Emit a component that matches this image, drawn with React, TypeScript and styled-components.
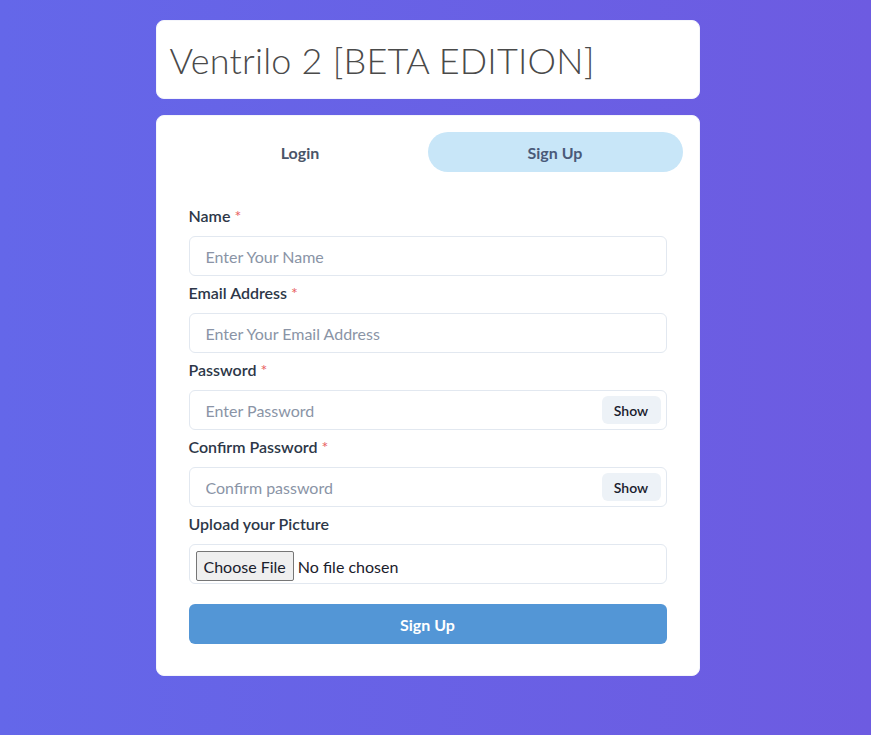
import { useState } from 'react';
import styled, { createGlobalStyle } from 'styled-components';

const GlobalStyle = createGlobalStyle`
  html, body {
    margin: 0;
    padding: 0;
  }
  body {
    min-height: 735px;
    background: linear-gradient(to right, #6467e9, #6d5be1);
    font-family: "Lato", "Noto Sans", sans-serif;
    color: #2d3748;
  }
  * {
    box-sizing: border-box;
  }
`;

const Page = styled.div`
  width: 544px;
  margin-left: calc(50% - 280px);
  padding: 20px 0 0;
  display: flex;
  flex-direction: column;
  gap: 16px;
`;

const TitleBox = styled.div`
  background: #fff;
  border: 1px solid #f4f5fb;
  border-radius: 8px;
  height: 79px;
  padding: 0 13px;
  display: flex;
  align-items: center;
`;

const Title = styled.h1`
  margin: 0;
  font-family: "Lato", "Open Sans", sans-serif;
  font-weight: 300;
  font-size: 36px;
  color: #4a4a4a;
  letter-spacing: 0.2px;
`;

const Card = styled.div`
  background: #fff;
  border: 1px solid #f4f5fb;
  border-radius: 8px;
  padding: 16px 16px 15px;
`;

const TabList = styled.div`
  display: grid;
  grid-template-columns: 1fr 1fr;
  margin-bottom: 16px;
`;

const Tab = styled.button<{ $active: boolean }>`
  height: 40px;
  border: none;
  border-radius: 999px;
  background: ${p => (p.$active ? '#c8e6f8' : 'transparent')};
  color: ${p => (p.$active ? '#4a5a78' : '#4a5568')};
  font-family: inherit;
  font-size: 16px;
  font-weight: 700;
  cursor: pointer;
`;

const Panel = styled.form`
  padding: 16px;
  display: flex;
  flex-direction: column;
  gap: 5px;
`;

const Field = styled.div`
  display: flex;
  flex-direction: column;
`;

const Label = styled.label`
  font-size: 16px;
  font-weight: 600;
  line-height: 24px;
  margin-bottom: 8px;
  color: #2d3748;
`;

const Star = styled.span`
  color: #e86060;
  margin-left: 4px;
  font-weight: 400;
`;

const InputGroup = styled.div`
  position: relative;
`;

const Input = styled.input`
  width: 100%;
  height: 40px;
  border: 1px solid #e2e8f0;
  border-radius: 6px;
  padding: 0 16px;
  font-family: inherit;
  font-size: 16px;
  color: #2d3748;
  outline: none;
  &::placeholder {
    color: #8a94a6;
  }
`;

const FileInput = styled(Input)`
  padding: 6px;
  color: #1a202c;
  &::file-selector-button {
    height: 30px;
    margin-right: 4px;
    padding: 0 7px;
    background: #efefef;
    border: 1px solid #767676;
    border-radius: 2px;
    font-family: inherit;
    font-size: 16px;
    color: #1a202c;
  }
`;

const ShowButton = styled.button`
  position: absolute;
  top: 6px;
  right: 6px;
  width: 59px;
  height: 28px;
  border: none;
  border-radius: 6px;
  background: #edf2f7;
  color: #1a202c;
  font-family: inherit;
  font-size: 14px;
  font-weight: 600;
`;

const Submit = styled.button`
  margin-top: 15px;
  height: 40px;
  border: none;
  border-radius: 6px;
  background: #5396d6;
  color: #fff;
  font-family: inherit;
  font-size: 16px;
  font-weight: 700;
`;

type TextFieldProps = {
  label: string;
  placeholder: string;
  type?: string;
  toggle?: boolean;
};

const TextField = ({ label, placeholder, type = 'text', toggle }: TextFieldProps) => (
  <Field>
    <Label>
      {label}
      <Star>*</Star>
    </Label>
    <InputGroup>
      <Input type={type} placeholder={placeholder} />
      {toggle && <ShowButton type="button">Show</ShowButton>}
    </InputGroup>
  </Field>
);

const App = () => {
  const [tab, setTab] = useState<'login' | 'signup'>('signup');
  return (
    <>
      <GlobalStyle />
      <Page>
        <TitleBox>
          <Title>Ventrilo 2 [BETA EDITION]</Title>
        </TitleBox>
        <Card>
          <TabList>
            <Tab $active={tab === 'login'} onClick={() => setTab('login')}>Login</Tab>
            <Tab $active={tab === 'signup'} onClick={() => setTab('signup')}>Sign Up</Tab>
          </TabList>
          <Panel onSubmit={e => e.preventDefault()}>
            <TextField label="Name" placeholder="Enter Your Name" />
            <TextField label="Email Address" placeholder="Enter Your Email Address" type="email" />
            <TextField label="Password" placeholder="Enter Password" type="password" toggle />
            <TextField label="Confirm Password" placeholder="Confirm password" type="password" toggle />
            <Field>
              <Label>Upload your Picture</Label>
              <FileInput type="file" accept="image/*" />
            </Field>
            <Submit type="submit">Sign Up</Submit>
          </Panel>
        </Card>
      </Page>
    </>
  );
};

export default App;
